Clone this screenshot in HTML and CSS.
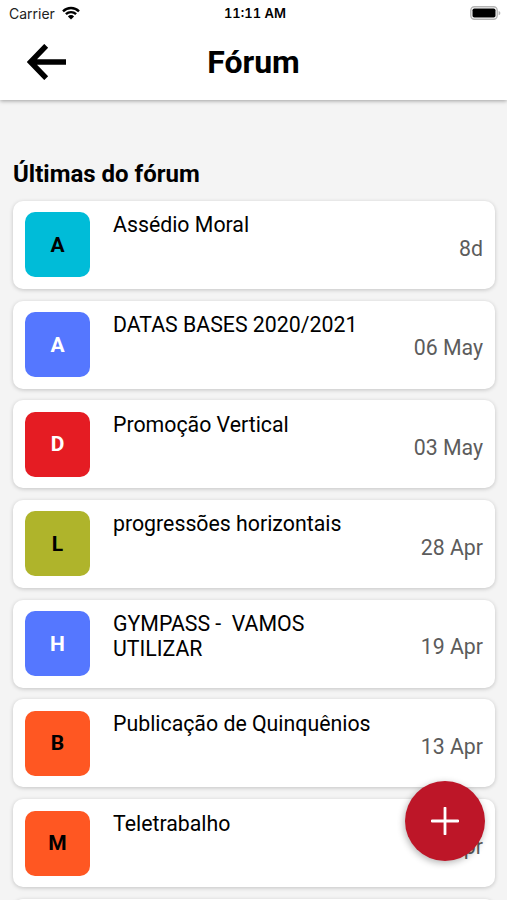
FILE: index.html
```html
<!DOCTYPE html>
<html lang="pt-BR">
<head>
    <meta charset="UTF-8">
    <meta name="viewport" content="width=device-width, initial-scale=1.0">
    <title>Fórum</title>
    <link rel="stylesheet" href="styles.css">
</head>
<body>
    <header class="header">
        <div class="status-bar">
            <div class="carrier">
                <span>Carrier</span>
                <svg class="wifi" viewBox="0 0 18 14" width="18" height="14">
                    <path d="M1 5.3a11.4 11.4 0 0 1 16 0M3.9 8.2a7.3 7.3 0 0 1 10.2 0" fill="none" stroke="#000" stroke-width="2.4"/>
                    <path d="M9 13.6L5.9 10.4a4.4 4.4 0 0 1 6.2 0z"/>
                </svg>
            </div>
            <span class="clock">11:11 AM</span>
            <div class="battery-box">
                <svg viewBox="0 0 31 14" width="31" height="14">
                    <rect x="0.8" y="0.8" width="26.4" height="12.4" rx="3.6" fill="#fff" stroke="#b4b4b4" stroke-width="1.4"/>
                    <rect x="2.5" y="2.5" width="23" height="9" rx="1.8"/>
                    <path d="M28.6 4.9q1.8.5 1.8 2.2t-1.8 2.2z" fill="#b4b4b4"/>
                </svg>
            </div>
        </div>
        <div class="nav">
            <button class="back-button" aria-label="Voltar">
                <svg viewBox="0 0 40 36" width="40" height="36">
                    <path d="M39 18H4M19.2 1.8L3.5 18l15.7 16.2" fill="none" stroke="#000" stroke-width="5.4"/>
                </svg>
            </button>
            <h1 class="title">Fórum</h1>
        </div>
    </header>

    <main class="content">
        <h2 class="subtitle">Últimas do fórum</h2>
        <div class="list">
            <div class="card">
                <div class="avatar cyan">A</div>
                <p class="topic">Assédio Moral</p>
                <span class="date">8d</span>
            </div>
            <div class="card">
                <div class="avatar blue">A</div>
                <p class="topic">DATAS BASES 2020/2021</p>
                <span class="date">06 May</span>
            </div>
            <div class="card">
                <div class="avatar red">D</div>
                <p class="topic">Promoção Vertical</p>
                <span class="date">03 May</span>
            </div>
            <div class="card">
                <div class="avatar lime">L</div>
                <p class="topic">progressões horizontais</p>
                <span class="date">28 Apr</span>
            </div>
            <div class="card">
                <div class="avatar blue">H</div>
                <p class="topic">GYMPASS -  VAMOS UTILIZAR</p>
                <span class="date">19 Apr</span>
            </div>
            <div class="card">
                <div class="avatar orange">B</div>
                <p class="topic">Publicação de Quinquênios</p>
                <span class="date">13 Apr</span>
            </div>
            <div class="card">
                <div class="avatar orange">M</div>
                <p class="topic">Teletrabalho</p>
                <span class="date">09 Apr</span>
            </div>
            <div class="card"></div>
        </div>
    </main>

    <button class="add-button" aria-label="Adicionar">
        <svg viewBox="0 0 28 28" width="28" height="28">
            <path d="M14 1v26M1 14h26" stroke="#fff" stroke-width="2.8" stroke-linecap="round"/>
        </svg>
    </button>
</body>
</html>
```
FILE: styles.css
```css
* {
    box-sizing: border-box;
}

body {
    height: 100vh;
    margin: 0;
    overflow: hidden;
    display: flex;
    flex-direction: column;
    background-color: #f4f4f4;
    color: #000;
    font-family: Roboto, Arial, sans-serif;
}

button {
    padding: 0;
    border: none;
    background: none;
    cursor: pointer;
}

svg {
    display: block;
}

/* Header */
.header {
    position: relative;
    height: 100px;
    flex-shrink: 0;
    background-color: #fff;
    box-shadow: 0 1px 4px rgba(0, 0, 0, 0.35);
}

.status-bar {
    display: grid;
    grid-template-columns: 1fr auto 1fr;
    align-items: center;
    height: 26px;
    padding: 0 6px 0 9px;
    font-family: Inter, sans-serif;
    font-size: 14px;
}

.carrier {
    display: flex;
    align-items: center;
    gap: 7px;
    color: #222;
}

.clock {
    font-size: 13px;
    font-weight: 600;
    font-variant-numeric: tabular-nums;
}

.battery-box {
    justify-self: end;
}

.nav {
    display: grid;
    grid-template-columns: 40px 1fr 40px;
    align-items: center;
    height: 72px;
    padding: 0 27px;
}

.title {
    margin: 0;
    font-size: 32px;
    font-weight: 700;
    line-height: 40px;
    text-align: center;
}

/* Topics */
.content {
    flex: 1;
    min-height: 0;
    overflow: hidden;
    padding: 59px 12px 0 13px;
}

.subtitle {
    margin: 0 0 12px;
    font-size: 24px;
    font-weight: 700;
    line-height: 30px;
}

.list {
    display: flex;
    flex-direction: column;
    gap: 11.7px;
}

.card {
    display: flex;
    height: 88px;
    padding: 11.4px 12px;
    background-color: #fff;
    border-radius: 10px;
    box-shadow: 0 1px 4px rgba(0, 0, 0, 0.2);
}

.avatar {
    display: flex;
    align-items: center;
    justify-content: center;
    flex-shrink: 0;
    width: 65px;
    height: 65px;
    margin-right: 23px;
    border-radius: 10px;
    font-size: 21px;
    font-weight: 700;
}

.cyan {
    background-color: #00bcd8;
}

.blue {
    background-color: #5577ff;
    color: #fff;
}

.red {
    background-color: #e51c23;
    color: #fff;
}

.lime {
    background-color: #afb42b;
}

.orange {
    background-color: #ff5722;
}

.topic {
    width: 265px;
    margin: 0;
    font-size: 21.3px;
    line-height: 25px;
    white-space: pre-wrap;
}

.date {
    align-self: center;
    margin-left: auto;
    margin-top: 6px;
    color: #5c5c5c;
    font-size: 21.3px;
    line-height: 25px;
}

/* Floating button over the list */
.add-button {
    position: fixed;
    right: 22px;
    bottom: 39px;
    display: flex;
    align-items: center;
    justify-content: center;
    width: 80px;
    height: 80px;
    border-radius: 50%;
    background-color: #bd1628;
    box-shadow: -1px 2px 7px rgba(0, 0, 0, 0.3);
}
```
